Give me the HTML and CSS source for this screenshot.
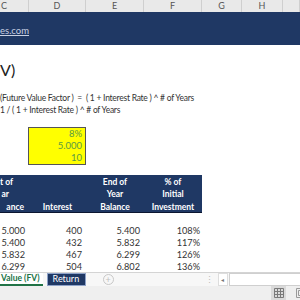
FILE: index.html
```html
<!DOCTYPE html>
<html lang="en">
<head>
    <meta charset="UTF-8">
    <meta name="viewport" content="width=device-width, initial-scale=1.0">
    <title>Future Value (FV)</title>
    <link rel="stylesheet" href="styles.css">
</head>
<body>
    <div class="sheet">
        <div class="cols colheads">
            <span class="head-c">C</span>
            <span>D</span>
            <span>E</span>
            <span>F</span>
            <span>G</span>
            <span>H</span>
            <span></span>
        </div>

        <div class="banner">
            <a class="site-link">es.com</a>
        </div>

        <div class="title">V)</div>
        <div class="formula">(Future Value Factor )&nbsp; = &nbsp;( 1 + Interest Rate ) ^ # of Years</div>
        <div class="formula">1 / ( 1 + Interest Rate ) ^ # of Years</div>

        <div class="cols inputs">
            <span></span>
            <div class="input-box">
                <div>8%</div>
                <div>5.000</div>
                <div>10</div>
            </div>
        </div>

        <div class="cols thead">
            <div class="th th-c">
                <span class="c1">t of</span>
                <span class="c2">ar</span>
                <span class="c3">ance</span>
            </div>
            <div class="th">Interest</div>
            <div class="th">End of<br>Year<br>Balance</div>
            <div class="th">% of<br>Initial<br>Investment</div>
        </div>

        <div class="rows">
            <div class="cols row"><span>5.000</span><span>400</span><span>5.400</span><span>108%</span></div>
            <div class="cols row"><span>5.400</span><span>432</span><span>5.832</span><span>117%</span></div>
            <div class="cols row"><span>5.832</span><span>467</span><span>6.299</span><span>126%</span></div>
            <div class="cols row"><span>6.299</span><span>504</span><span>6.802</span><span>136%</span></div>
        </div>
    </div>

    <div class="tabbar">
        <div class="tab active">Value (FV)</div>
        <div class="tab dark">Return</div>
        <div class="add-tab">+</div>
        <div class="grip">&#8942;</div>
        <div class="scroll-left">&#9666;</div>
        <div class="scroll-track"></div>
    </div>

    <div class="statusbar">
        <div class="view-btn on">
            <svg width="10" height="10" viewBox="0 0 10 10">
                <path d="M0.5 0.5h9v9h-9z M0.5 3.5h9 M0.5 6.5h9 M3.5 0.5v9 M6.5 0.5v9" fill="none" stroke="#7a7a7a" stroke-width="1"/>
            </svg>
        </div>
        <div class="view-btn">
            <svg width="10" height="10" viewBox="0 0 10 10">
                <path d="M0.5 0.5h9v9h-9z M2.5 2.5h5v5h-5z" fill="none" stroke="#9a9a9a" stroke-width="1"/>
            </svg>
        </div>
    </div>
</body>
</html>
```

FILE: styles.css
```css
body {
    margin: 0;
    width: 300px;
    height: 300px;
    overflow: hidden;
    font-family: Lato, "Open Sans", sans-serif;
    color: #333;
    background: #fff;
}
.sheet {
    height: 272px;
    overflow: hidden;
}
.cols {
    display: grid;
    grid-template-columns: 29px 57px 58px 58px 40px 41px 17px;
}

/* column letters */
.colheads {
    height: 12px;
    background: #e9e9e9;
    font-size: 9px;
    line-height: 12px;
    color: #555;
}
.colheads span {
    text-align: center;
    border-right: 1px solid #cfcfcf;
}
.head-c {
    text-align: left !important;
    padding-left: 1px;
}

/* banner */
.banner {
    height: 33px;
    background: #1f3864;
    box-sizing: border-box;
    padding-top: 12px;
}
.site-link {
    display: block;
    font-size: 9.5px;
    line-height: 14px;
    color: #c9d1e3;
    text-decoration: underline;
}

/* title and formulas */
.title {
    margin-top: 16px;
    height: 18px;
    line-height: 18px;
    font-size: 16px;
    color: #222;
}
.formula {
    font-size: 8.5px;
    letter-spacing: -0.25px;
    line-height: 12px;
    white-space: nowrap;
}
.title + .formula {
    margin-top: 13px;
}

/* input cells */
.inputs {
    margin-top: 11px;
}
.input-box {
    background: #ffff00;
    border: 1px solid #555;
    margin-left: -1px;
    padding-right: 3px;
    text-align: right;
    font-size: 9.5px;
    line-height: 12px;
    color: #5a9a45;
}

/* table header */
.thead {
    margin-top: 10px;
    width: 202px;
    grid-template-columns: 29px 57px 58px 58px;
    height: 36px;
    background: #1f3864;
    border-bottom: 1px solid #0b1630;
    color: #fff;
    font-weight: bold;
    font-size: 8.5px;
    line-height: 12.3px;
    padding-top: 1px;
}
.th {
    text-align: center;
    display: flex;
    flex-direction: column;
    justify-content: flex-end;
    white-space: nowrap;
}
.th-c {
    align-items: flex-end;
}
.th-c .c1 {
    margin-right: 16px;
}
.th-c .c2 {
    margin-right: 20px;
}
.th-c .c3 {
    margin-right: 5px;
}

/* data rows */
.rows {
    margin-top: 12px;
}
.row {
    height: 12px;
    line-height: 12px;
    font-size: 9.2px;
    color: #333;
}
.row span {
    text-align: right;
    padding-right: 4px;
}
.row span:nth-child(4) {
    padding-right: 2px;
}

/* sheet tabs */
.tabbar {
    height: 13px;
    border-top: 1px solid #d4d4d4;
    background: #f7f7f7;
    display: flex;
    align-items: stretch;
    font-size: 8.5px;
}
.tab {
    line-height: 11px;
    white-space: nowrap;
}
.tab.active {
    padding: 0 3px 0 1px;
    background: #fff;
    color: #217346;
    font-weight: bold;
    border-bottom: 2px solid #217346;
}
.tab.dark {
    margin-left: 4px;
    padding: 0 5px;
    width: 27px;
    background: #1f3864;
    color: #fff;
    border: 1px solid #8ea2c8;
    line-height: 10px;
    font-size: 9px;
}
.add-tab {
    margin-left: 17px;
    width: 9px;
    height: 9px;
    margin-top: 1px;
    border: 1px solid #c8c8c8;
    border-radius: 50%;
    color: #c0c0c0;
    font-size: 9px;
    line-height: 9px;
    text-align: center;
}
.grip {
    margin-left: 91px;
    color: #bbb;
    font-size: 9px;
    line-height: 13px;
}
.scroll-left {
    margin-left: 4px;
    width: 10px;
    background: #fff;
    border: 1px solid #ddd;
    box-sizing: border-box;
    color: #777;
    font-size: 6px;
    line-height: 11px;
    text-align: center;
}
.scroll-track {
    flex: 1;
    margin-left: 1px;
    background: #fff;
    border: 1px solid #cfcfcf;
    border-right: none;
}

/* status bar */
.statusbar {
    height: 14px;
    background: #efefef;
    display: flex;
    justify-content: flex-end;
}
.view-btn {
    width: 15px;
    display: flex;
    align-items: center;
    justify-content: center;
    margin-left: 7px;
}
.view-btn.on {
    background: #dadada;
}
.view-btn:last-child {
    margin-right: -8px;
}
```
